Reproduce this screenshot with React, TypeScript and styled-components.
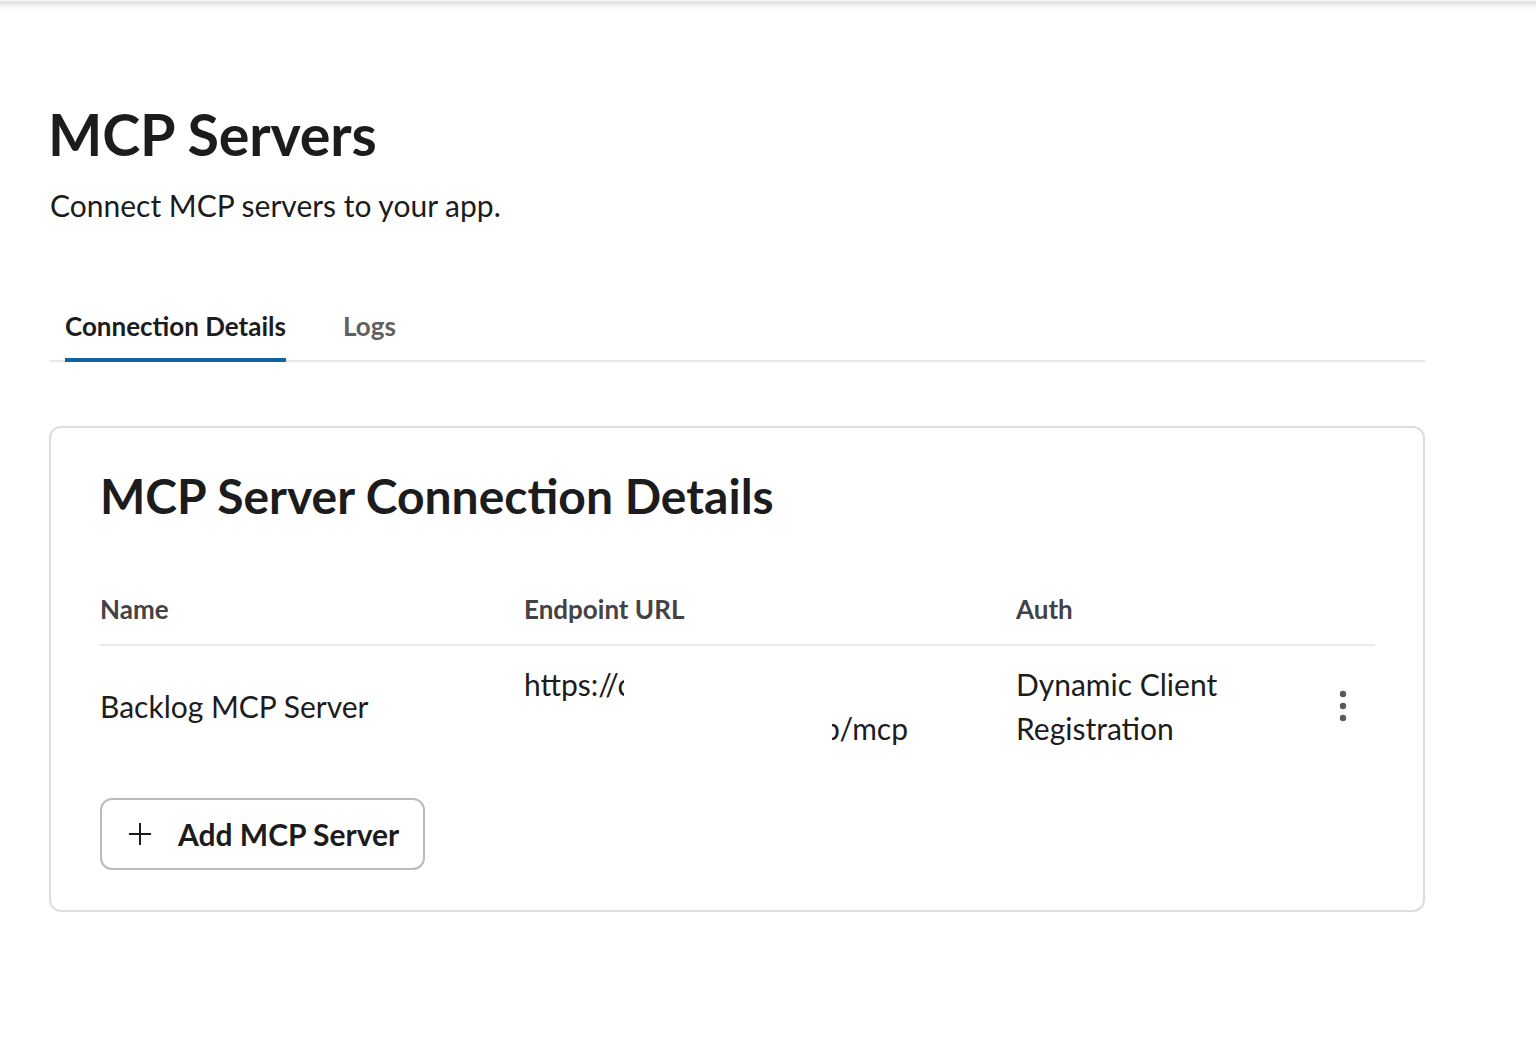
import React from "react";
import styled, { createGlobalStyle } from "styled-components";

const Global = createGlobalStyle`
  html, body { margin: 0; padding: 0; background: #fff; }
  body { font-family: Lato, "Noto Sans", sans-serif; color: #1d1c1d; }
`;

const TopShadow = styled.div`
  height: 10px;
  background: linear-gradient(to bottom, #fff 0px, #dcdcdc 2px, #ececec 4px, #fafafa 8px, #fff 10px);
`;

const Page = styled.main`
  width: 1376px;
  padding: 92px 0 0 49px;
`;

const Title = styled.h1`
  margin: 0 0 0 -1px;
  font-size: 57.5px;
  line-height: 64px;
  font-weight: 700;
  letter-spacing: -0.2px;
`;

const Subtitle = styled.p`
  margin: 19px 0 0 1px;
  font-size: 30px;
  line-height: 40px;
  font-weight: 400;
`;

const TabBar = styled.nav`
  margin-top: 84px;
  display: flex;
  gap: 57px;
  padding-left: 16px;
  border-bottom: 2px solid #e8e8e8;
`;

const Tab = styled.button<{ $active?: boolean }>`
  border: none;
  background: none;
  padding: 0 0 15px;
  margin-bottom: -2px;
  font-family: inherit;
  font-size: 26px;
  line-height: 34px;
  font-weight: 700;
  color: ${(p) => (p.$active ? "#1d1c1d" : "#616061")};
  border-bottom: 4px solid ${(p) => (p.$active ? "#1264a3" : "transparent")};
  cursor: pointer;
`;

const Card = styled.section`
  margin-top: 64px;
  border: 2px solid #dddddd;
  border-radius: 12px;
  padding: 38px 48px 40px 49px;
`;

const CardTitle = styled.h2`
  margin: 0;
  font-size: 48px;
  line-height: 60px;
  font-weight: 700;
`;

const Table = styled.div`
  margin-top: 67px;
  display: grid;
  grid-template-columns: 424px 492px 1fr 66px;
`;

const HeadCell = styled.div`
  font-size: 26px;
  line-height: 32px;
  font-weight: 700;
  color: #454245;
  padding-bottom: 19px;
  border-bottom: 2px solid #e8e8e8;
`;

const Cell = styled.div`
  display: flex;
  flex-direction: column;
  justify-content: center;
  font-size: 30px;
  line-height: 44px;
  padding: 16px 0 16px;
`;

const UrlLine = styled.div<{ $w: number; $end?: boolean; $indent?: number }>`
  width: ${(p) => p.$w}px;
  margin-left: ${(p) => p.$indent || 0}px;
  overflow: hidden;
  white-space: nowrap;
  display: flex;
  justify-content: ${(p) => (p.$end ? "flex-end" : "flex-start")};
`;

const KebabCell = styled.div`
  display: flex;
  align-items: center;
  padding-left: 26px;
`;

const IconButton = styled.button`
  border: none;
  background: none;
  padding: 0;
  width: 16px;
  height: 36px;
  display: flex;
  align-items: center;
  justify-content: center;
  cursor: pointer;
`;

const AddButton = styled.button`
  margin-top: 32px;
  display: flex;
  align-items: center;
  gap: 26px;
  height: 72px;
  padding: 0 24px 0 26px;
  border: 2px solid #bbbbbb;
  border-radius: 12px;
  background: #fff;
  font-family: inherit;
  font-size: 30px;
  font-weight: 700;
  color: #1d1c1d;
  cursor: pointer;
`;

export default function App() {
  return (
    <>
      <Global />
      <TopShadow />
      <Page>
        <Title>MCP Servers</Title>
        <Subtitle>Connect MCP servers to your app.</Subtitle>
        <TabBar>
          <Tab $active>Connection Details</Tab>
          <Tab>Logs</Tab>
        </TabBar>
        <Card>
          <CardTitle>MCP Server Connection Details</CardTitle>
          <Table>
            <HeadCell>Name</HeadCell>
            <HeadCell>Endpoint URL</HeadCell>
            <HeadCell>Auth</HeadCell>
            <HeadCell />
            <Cell>Backlog MCP Server</Cell>
            <Cell>
              <UrlLine $w={100}>https://c</UrlLine>
              <UrlLine $w={76} $indent={308} $end>p/mcp</UrlLine>
            </Cell>
            <Cell>
              <div>Dynamic Client</div>
              <div>Registration</div>
            </Cell>
            <KebabCell>
              <IconButton aria-label="More actions">
                <svg width="8" height="32" viewBox="0 0 8 32">
                  <circle cx="4" cy="4" r="3.2" fill="#5a5a5a" />
                  <circle cx="4" cy="16" r="3.2" fill="#5a5a5a" />
                  <circle cx="4" cy="28" r="3.2" fill="#5a5a5a" />
                </svg>
              </IconButton>
            </KebabCell>
          </Table>
          <AddButton>
            <svg width="24" height="24" viewBox="0 0 24 24">
              <path d="M12 1v22M1 12h22" stroke="#1d1c1d" strokeWidth="2" />
            </svg>
            Add MCP Server
          </AddButton>
        </Card>
      </Page>
    </>
  );
}
